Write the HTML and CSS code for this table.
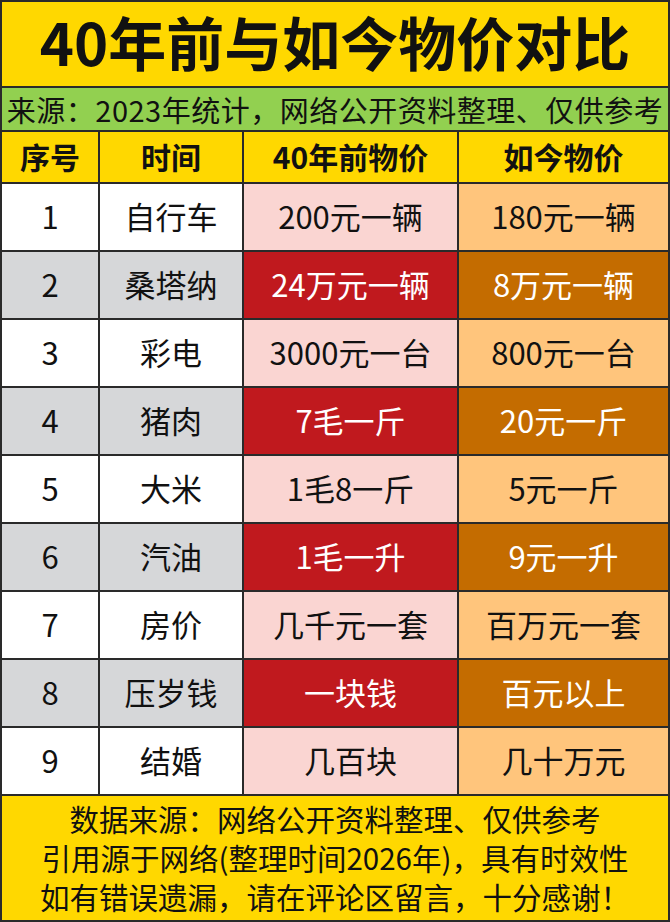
FILE: index.html
```html
<!DOCTYPE html>
<html lang="zh-CN">
<head>
<meta charset="utf-8">
<link rel="stylesheet" href="styles.css">
</head>
<body>
<div class="sheet">
  <div class="title span">40年前与如今物价对比</div>
  <div class="source span">来源：2023年统计，网络公开资料整理、仅供参考</div>

  <div class="cell head">序号</div>
  <div class="cell head">时间</div>
  <div class="cell head">40年前物价</div>
  <div class="cell head">如今物价</div>

  <div class="cell plain">1</div><div class="cell plain">自行车</div><div class="cell pink">200元一辆</div><div class="cell peach">180元一辆</div>
  <div class="cell gray">2</div><div class="cell gray">桑塔纳</div><div class="cell red">24万元一辆</div><div class="cell amber">8万元一辆</div>
  <div class="cell plain">3</div><div class="cell plain">彩电</div><div class="cell pink">3000元一台</div><div class="cell peach">800元一台</div>
  <div class="cell gray">4</div><div class="cell gray">猪肉</div><div class="cell red">7毛一斤</div><div class="cell amber">20元一斤</div>
  <div class="cell plain">5</div><div class="cell plain">大米</div><div class="cell pink">1毛8一斤</div><div class="cell peach">5元一斤</div>
  <div class="cell gray">6</div><div class="cell gray">汽油</div><div class="cell red">1毛一升</div><div class="cell amber">9元一升</div>
  <div class="cell plain">7</div><div class="cell plain">房价</div><div class="cell pink">几千元一套</div><div class="cell peach">百万元一套</div>
  <div class="cell gray">8</div><div class="cell gray">压岁钱</div><div class="cell red">一块钱</div><div class="cell amber">百元以上</div>
  <div class="cell plain">9</div><div class="cell plain">结婚</div><div class="cell pink">几百块</div><div class="cell peach">几十万元</div>

  <div class="footer span">
    <p>数据来源：网络公开资料整理、仅供参考</p>
    <p>引用源于网络(整理时间2026年)，具有时效性</p>
    <p>如有错误遗漏，请在评论区留言，十分感谢！</p>
  </div>
</div>
</body>
</html>
```

FILE: styles.css
```css
html, body {
  margin: 0;
  padding: 0;
  background: #2a2a2a;
}

.sheet {
  box-sizing: border-box;
  width: 670px;
  height: 922px;
  padding: 2px;
  background: #2a2a2a;
  display: grid;
  grid-template-columns: 96px 142px 213px 209px;
  grid-template-rows: 84px 42px 50px repeat(9, 66px) 124px;
  gap: 2px;
  font-family: "Noto Sans CJK SC", "Noto Sans", sans-serif;
  color: #111;
}

.span {
  grid-column: 1 / -1;
}

.title {
  background: #ffd800;
  display: flex;
  align-items: center;
  justify-content: center;
  font-size: 58px;
  font-weight: 700;
  line-height: 1;
  padding-bottom: 6px;
  white-space: nowrap;
}

.source {
  background: #92d050;
  display: flex;
  align-items: center;
  justify-content: center;
  font-size: 29px;
  letter-spacing: 0.5px;
  line-height: 1;
  white-space: nowrap;
}

.cell {
  display: flex;
  align-items: center;
  justify-content: center;
  font-size: 31px;
  line-height: 1;
  padding-bottom: 3px;
  white-space: nowrap;
}

.head {
  background: #ffd800;
  font-weight: 700;
  font-size: 30px;
}

.plain { background: #ffffff; }
.gray  { background: #d6d7d9; }
.pink  { background: #fad5d2; }
.peach { background: #ffc57c; }
.red   { background: #c0191e; color: #fff; }
.amber { background: #c46c00; color: #fff; }

.footer {
  background: #ffd800;
  display: flex;
  flex-direction: column;
  align-items: center;
  justify-content: center;
  font-size: 29.5px;
  line-height: 39px;
  padding-bottom: 2px;
}

.footer p {
  margin: 0;
  white-space: nowrap;
}
```
